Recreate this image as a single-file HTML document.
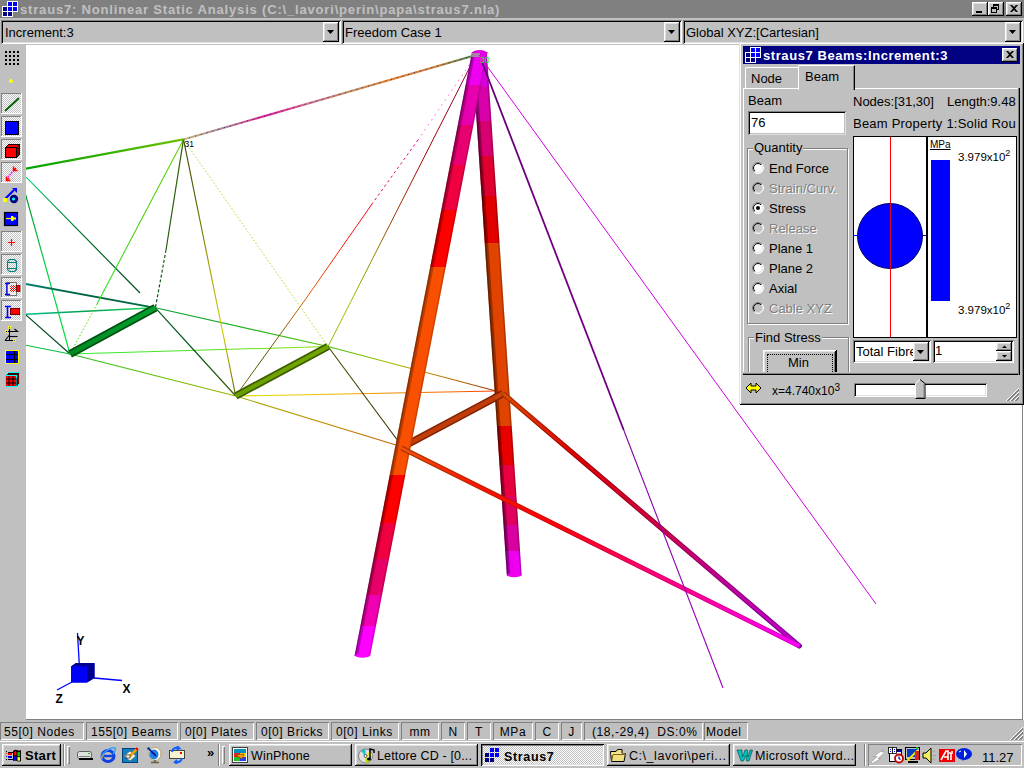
<!DOCTYPE html>
<html><head><meta charset="utf-8">
<style>
*{margin:0;padding:0;box-sizing:border-box}
html,body{width:1024px;height:768px;overflow:hidden;background:#c0c0c0;font-family:"Liberation Sans",sans-serif;color:#000}
.a{position:absolute}
.t{position:absolute;white-space:nowrap;line-height:1}
.raised{box-shadow:inset -1px -1px #000,inset 1px 1px #fff,inset -2px -2px #808080,inset 2px 2px #dfdfdf;background:#c0c0c0}
.sunk{box-shadow:inset 1px 1px #808080,inset -1px -1px #fff,inset 2px 2px #000,inset -2px -2px #dfdfdf}
.thin{box-shadow:inset 1px 1px #808080,inset -1px -1px #fff}
.dith{background-color:#fff;background-image:linear-gradient(45deg,#c0c0c0 25%,transparent 25%,transparent 75%,#c0c0c0 75%),linear-gradient(45deg,#c0c0c0 25%,transparent 25%,transparent 75%,#c0c0c0 75%);background-size:2px 2px;background-position:0 0,1px 1px}
</style></head><body>
<!-- title bar -->
<div class="a" style="left:0;top:0;width:1024px;height:18px;background:#808080"></div>
<div id="title" class="t" style="left:20px;top:3px;font-size:13px;font-weight:bold;color:#c0c0c0;letter-spacing:0.82px">straus7: Nonlinear Static Analysis (C:\_lavori\perin\papa\straus7.nla)</div>
<!-- main title icon -->
<svg class="a" style="left:0;top:0" width="20" height="18" viewBox="0 0 20 18">
<path d="M7 1h11v11h-5v5H2V6h5z" fill="#fff"/>
<rect x="8" y="2" width="4" height="4" fill="#00f"/><rect x="13" y="2" width="4" height="4" fill="#00f"/>
<rect x="3" y="7" width="4" height="4" fill="#000080"/><rect x="8" y="7" width="4" height="4" fill="#00f"/><rect x="13" y="7" width="4" height="4" fill="#00f"/>
<rect x="3" y="12" width="4" height="4" fill="#000080"/><rect x="8" y="12" width="4" height="4" fill="#000080"/>
</svg>
<!-- window buttons -->
<div class="a raised" style="left:972px;top:2px;width:16px;height:14px"></div>
<div class="a" style="left:976px;top:11px;width:6px;height:2px;background:#000"></div>
<div class="a raised" style="left:988px;top:2px;width:16px;height:14px"></div>
<svg class="a" style="left:988px;top:2px" width="16" height="14" shape-rendering="crispEdges"><path d="M5 2h6v2h-6zM10 4h1v4h-1zM5 4h1v1h-1zM9 7h1v1h-1z" fill="#000"/><path d="M3 5h6v2h-6zM3 7h1v4h-1zM8 7h1v4h-1zM3 10h6v1h-6z" fill="#000"/></svg>
<div class="a raised" style="left:1006px;top:2px;width:16px;height:14px"></div>
<svg class="a" style="left:1006px;top:2px" width="16" height="14"><path d="M4 3h2l2 2 2-2h2l-3 3.5 3 3.5h-2l-2-2-2 2h-2l3-3.5z" fill="#000"/></svg>

<!-- combos -->
<div class="a sunk" style="left:1px;top:20px;width:340px;height:24px;background:#c0c0c0"></div>
<div class="t" style="left:5px;top:26px;font-size:13px">Increment:3</div>
<div class="a raised" style="left:323px;top:22px;width:16px;height:20px"></div>
<svg class="a" style="left:323px;top:22px" width="16" height="20"><path d="M4 8h7l-3.5 4z" fill="#000"/></svg>

<div class="a sunk" style="left:342px;top:20px;width:340px;height:24px;background:#c0c0c0"></div>
<div class="t" style="left:345px;top:26px;font-size:13px">Freedom Case 1</div>
<div class="a raised" style="left:664px;top:22px;width:16px;height:20px"></div>
<svg class="a" style="left:664px;top:22px" width="16" height="20"><path d="M4 8h7l-3.5 4z" fill="#000"/></svg>

<div class="a sunk" style="left:683px;top:20px;width:340px;height:24px;background:#c0c0c0"></div>
<div class="t" style="left:686px;top:26px;font-size:13px">Global XYZ:[Cartesian]</div>
<div class="a raised" style="left:1005px;top:22px;width:16px;height:20px"></div>
<svg class="a" style="left:1005px;top:22px" width="16" height="20"><path d="M4 8h7l-3.5 4z" fill="#000"/></svg>

<!-- viewport -->
<div class="a" style="left:26px;top:44px;width:997px;height:676px;background:#808080"></div>
<div class="a" style="left:1023px;top:44px;width:1px;height:676px;background:#fff"></div>
<div class="a" style="left:26px;top:45px;width:996px;height:674px;background:#fff"></div>
<div class="a" style="left:26px;top:44px;width:998px;height:1px;background:#c0c0c0"></div>

<!--3D--><svg class="a" style="left:26px;top:45px" width="996" height="674" viewBox="26 45 996 674" fill="none"><defs><linearGradient id="g1" gradientUnits="userSpaceOnUse" x1="20" y1="169.81619047619046" x2="183.5" y2="139.4"><stop offset="0.0" stop-color="#00a000"/><stop offset="0.5" stop-color="#30b000"/><stop offset="1.0" stop-color="#70c000"/></linearGradient><linearGradient id="g2" gradientUnits="userSpaceOnUse" x1="20" y1="170.89473684210526" x2="140" y2="293"><stop offset="0.0" stop-color="#00e070"/><stop offset="0.5" stop-color="#007030"/><stop offset="1.0" stop-color="#005020"/></linearGradient><linearGradient id="g3" gradientUnits="userSpaceOnUse" x1="20" y1="174.45454545454544" x2="70" y2="354"><stop offset="0.0" stop-color="#008030"/><stop offset="0.5" stop-color="#00d040"/><stop offset="1.0" stop-color="#00e040"/></linearGradient><linearGradient id="g4" gradientUnits="userSpaceOnUse" x1="20" y1="282.8964451313756" x2="155.4" y2="307.8"><stop offset="0.0" stop-color="#008070"/><stop offset="0.5" stop-color="#006040"/><stop offset="1.0" stop-color="#007040"/></linearGradient><linearGradient id="g5" gradientUnits="userSpaceOnUse" x1="20" y1="314.6013910355487" x2="155.4" y2="307.8"><stop offset="0.0" stop-color="#00c090"/><stop offset="0.5" stop-color="#00a050"/><stop offset="1.0" stop-color="#20e060"/></linearGradient><linearGradient id="g6" gradientUnits="userSpaceOnUse" x1="70" y1="354" x2="235.7" y2="396"><stop offset="0.0" stop-color="#20c020"/><stop offset="0.5" stop-color="#60c000"/><stop offset="1.0" stop-color="#a0b000"/></linearGradient><linearGradient id="g7" gradientUnits="userSpaceOnUse" x1="70" y1="354" x2="328" y2="346.5"><stop offset="0.0" stop-color="#30f030"/><stop offset="0.5" stop-color="#50e020"/><stop offset="1.0" stop-color="#90e000"/></linearGradient><linearGradient id="g8" gradientUnits="userSpaceOnUse" x1="155.4" y1="307.8" x2="328" y2="346.5"><stop offset="0.0" stop-color="#00a030"/><stop offset="0.5" stop-color="#20b020"/><stop offset="1.0" stop-color="#50c000"/></linearGradient><linearGradient id="g9" gradientUnits="userSpaceOnUse" x1="155.4" y1="307.8" x2="235.7" y2="396"><stop offset="0.0" stop-color="#005a20"/><stop offset="0.5" stop-color="#005010"/><stop offset="1.0" stop-color="#406000"/></linearGradient><linearGradient id="g10" gradientUnits="userSpaceOnUse" x1="183.5" y1="139.4" x2="97" y2="304"><stop offset="0.0" stop-color="#60d000"/><stop offset="0.5" stop-color="#40d000"/><stop offset="1.0" stop-color="#20e020"/></linearGradient><linearGradient id="g11" gradientUnits="userSpaceOnUse" x1="183.5" y1="139.4" x2="166" y2="250"><stop offset="0.0" stop-color="#306000"/><stop offset="1.0" stop-color="#206010"/></linearGradient><linearGradient id="g12" gradientUnits="userSpaceOnUse" x1="166" y1="250" x2="155.4" y2="307.8"><stop offset="0.0" stop-color="#206010"/><stop offset="1.0" stop-color="#005020"/></linearGradient><linearGradient id="g13" gradientUnits="userSpaceOnUse" x1="183.5" y1="139.4" x2="235.7" y2="396"><stop offset="0.0" stop-color="#404000"/><stop offset="0.25" stop-color="#606000"/><stop offset="0.5" stop-color="#a0a000"/><stop offset="0.75" stop-color="#d0d000"/><stop offset="1.0" stop-color="#606000"/></linearGradient><linearGradient id="g14" gradientUnits="userSpaceOnUse" x1="183.5" y1="139.4" x2="476" y2="55"><stop offset="0.0" stop-color="#c8b888"/><stop offset="0.143" stop-color="#b08090"/><stop offset="0.286" stop-color="#e02090"/><stop offset="0.429" stop-color="#d07090"/><stop offset="0.571" stop-color="#c09060"/><stop offset="0.714" stop-color="#e08030"/><stop offset="0.857" stop-color="#d08040"/><stop offset="1.0" stop-color="#408040"/></linearGradient><linearGradient id="g15" gradientUnits="userSpaceOnUse" x1="418" y1="140" x2="372" y2="204"><stop offset="0.0" stop-color="#e000a0"/><stop offset="1.0" stop-color="#f00040"/></linearGradient><linearGradient id="g16" gradientUnits="userSpaceOnUse" x1="372" y1="204" x2="305" y2="300"><stop offset="0.0" stop-color="#f00020"/><stop offset="0.5" stop-color="#ff2000"/><stop offset="1.0" stop-color="#e06000"/></linearGradient><linearGradient id="g17" gradientUnits="userSpaceOnUse" x1="305" y1="300" x2="235.7" y2="396"><stop offset="0.0" stop-color="#e06000"/><stop offset="0.333" stop-color="#806000"/><stop offset="0.667" stop-color="#505000"/><stop offset="1.0" stop-color="#808000"/></linearGradient><linearGradient id="g18" gradientUnits="userSpaceOnUse" x1="476" y1="55" x2="328" y2="346.5"><stop offset="0.0" stop-color="#a00040"/><stop offset="0.143" stop-color="#a00020"/><stop offset="0.286" stop-color="#a00000"/><stop offset="0.429" stop-color="#a01000"/><stop offset="0.571" stop-color="#a04000"/><stop offset="0.714" stop-color="#909000"/><stop offset="0.857" stop-color="#a0c000"/><stop offset="1.0" stop-color="#80c000"/></linearGradient><linearGradient id="g19" gradientUnits="userSpaceOnUse" x1="235.7" y1="396" x2="496" y2="391"><stop offset="0.0" stop-color="#e0e000"/><stop offset="0.333" stop-color="#f0c000"/><stop offset="0.667" stop-color="#f08000"/><stop offset="1.0" stop-color="#ff4000"/></linearGradient><linearGradient id="g20" gradientUnits="userSpaceOnUse" x1="235.7" y1="396" x2="402.5" y2="447"><stop offset="0.0" stop-color="#a0b000"/><stop offset="0.5" stop-color="#c09000"/><stop offset="1.0" stop-color="#c06000"/></linearGradient><linearGradient id="g21" gradientUnits="userSpaceOnUse" x1="328" y1="346.5" x2="496" y2="391"><stop offset="0.0" stop-color="#40c000"/><stop offset="0.333" stop-color="#a0c000"/><stop offset="0.667" stop-color="#c08000"/><stop offset="1.0" stop-color="#a03000"/></linearGradient><linearGradient id="g22" gradientUnits="userSpaceOnUse" x1="328" y1="346.5" x2="402.5" y2="447"><stop offset="0.0" stop-color="#405000"/><stop offset="0.5" stop-color="#404000"/><stop offset="1.0" stop-color="#402000"/></linearGradient><linearGradient id="g23" gradientUnits="userSpaceOnUse" x1="70" y1="354" x2="155.4" y2="307.8"><stop offset="0.0" stop-color="#008a20"/><stop offset="1.0" stop-color="#00a030"/></linearGradient><linearGradient id="g24" gradientUnits="userSpaceOnUse" x1="235.7" y1="396" x2="328" y2="346.5"><stop offset="0.0" stop-color="#68a000"/><stop offset="1.0" stop-color="#70a800"/></linearGradient><linearGradient id="g25" gradientUnits="userSpaceOnUse" x1="503" y1="393.5" x2="799.4" y2="646"><stop offset="0.0" stop-color="#a03000"/><stop offset="0.25" stop-color="#a00000"/><stop offset="0.5" stop-color="#a00030"/><stop offset="0.75" stop-color="#900070"/><stop offset="1.0" stop-color="#8000a0"/></linearGradient><linearGradient id="g26" gradientUnits="userSpaceOnUse" x1="503" y1="393.5" x2="799.4" y2="646"><stop offset="0.0" stop-color="#e04800"/><stop offset="0.25" stop-color="#e00000"/><stop offset="0.5" stop-color="#d00040"/><stop offset="0.75" stop-color="#c000a0"/><stop offset="1.0" stop-color="#c000d0"/></linearGradient><linearGradient id="g27" gradientUnits="userSpaceOnUse" x1="401.5" y1="448" x2="799.4" y2="646"><stop offset="0.0" stop-color="#a03000"/><stop offset="0.2" stop-color="#c02000"/><stop offset="0.4" stop-color="#d00000"/><stop offset="0.6" stop-color="#d00050"/><stop offset="0.8" stop-color="#d00090"/><stop offset="1.0" stop-color="#d000d0"/></linearGradient><linearGradient id="g28" gradientUnits="userSpaceOnUse" x1="401.5" y1="448" x2="799.4" y2="646"><stop offset="0.0" stop-color="#f05010"/><stop offset="0.2" stop-color="#ff1000"/><stop offset="0.4" stop-color="#ff0010"/><stop offset="0.6" stop-color="#ff0070"/><stop offset="0.8" stop-color="#ff00b0"/><stop offset="1.0" stop-color="#ff00ff"/></linearGradient><linearGradient id="g29" gradientUnits="userSpaceOnUse" x1="482" y1="62" x2="623.7" y2="430"><stop offset="0.0" stop-color="#600070"/><stop offset="0.5" stop-color="#700080"/><stop offset="1.0" stop-color="#700080"/></linearGradient><linearGradient id="g30" gradientUnits="userSpaceOnUse" x1="623.7" y1="430" x2="723" y2="688"><stop offset="0.0" stop-color="#8000a0"/><stop offset="0.5" stop-color="#9000b0"/><stop offset="1.0" stop-color="#a000c0"/></linearGradient></defs><path d="M20.0,169.8L183.5,139.4" stroke="url(#g1)" stroke-width="2.21" stroke-linecap="butt"/>
<path d="M20.0,170.9L140.0,293.0" stroke="url(#g2)" stroke-width="1.2" stroke-linecap="butt"/>
<path d="M20.0,174.5L70.0,354.0" stroke="url(#g3)" stroke-width="1.2" stroke-linecap="butt"/>
<path d="M20.0,282.9L155.4,307.8" stroke="url(#g4)" stroke-width="1.76" stroke-linecap="butt"/>
<path d="M20.0,314.6L155.4,307.8" stroke="url(#g5)" stroke-width="1.44" stroke-linecap="butt"/>
<path d="M20.0,309.7L70.0,354.0" stroke="#004a20" stroke-width="1.2" stroke-linecap="butt"/>
<path d="M20.0,344.1L70.0,354.0" stroke="#00c040" stroke-width="1.04" stroke-linecap="butt"/>
<path d="M70.0,354.0L235.7,396.0" stroke="url(#g6)" stroke-width="1.04" stroke-linecap="butt"/>
<path d="M70.0,354.0L328.0,346.5" stroke="url(#g7)" stroke-width="1.04" stroke-linecap="butt"/>
<path d="M155.4,307.8L328.0,346.5" stroke="url(#g8)" stroke-width="1.12" stroke-linecap="butt"/>
<path d="M155.4,307.8L235.7,396.0" stroke="url(#g9)" stroke-width="1.2" stroke-linecap="butt"/>
<path d="M183.5,139.4L97.0,304.0" stroke="url(#g10)" stroke-width="1.04" stroke-linecap="butt"/>
<path d="M97.0,304.0L70.0,354.0" stroke="#40e000" stroke-width="1.0" stroke-dasharray="1.5 2" stroke-linecap="butt"/>
<path d="M183.5,139.4L166.0,250.0" stroke="url(#g11)" stroke-width="1.2" stroke-linecap="butt"/>
<path d="M166.0,250.0L155.4,307.8" stroke="url(#g12)" stroke-width="1.2" stroke-dasharray="3 2" stroke-linecap="butt"/>
<path d="M183.5,139.4L235.7,396.0" stroke="url(#g13)" stroke-width="1.12" stroke-linecap="butt"/>
<path d="M183.5,139.4L328.0,346.5" stroke="#a0e030" stroke-width="1.0" stroke-dasharray="1.5 2" stroke-linecap="butt"/>
<path d="M183.5,139.4L476.0,55.0" stroke="url(#g14)" stroke-width="2.12" stroke-linecap="butt"/>
<path d="M183.5,139.4L476.0,55.0" stroke="#000080" stroke-width="1.0" stroke-dasharray="1 5" stroke-opacity="0.7" stroke-linecap="butt"/>
<path d="M476.0,55.0L418.0,140.0" stroke="#ff00d0" stroke-width="1.0" stroke-dasharray="1 5" stroke-linecap="butt"/>
<path d="M418.0,140.0L372.0,204.0" stroke="url(#g15)" stroke-width="1.0" stroke-dasharray="2.5 3" stroke-linecap="butt"/>
<path d="M372.0,204.0L305.0,300.0" stroke="url(#g16)" stroke-width="1.0" stroke-linecap="butt"/>
<path d="M305.0,300.0L235.7,396.0" stroke="url(#g17)" stroke-width="1.0" stroke-linecap="butt"/>
<path d="M476.0,55.0L328.0,346.5" stroke="url(#g18)" stroke-width="1.0" stroke-linecap="butt"/>
<path d="M235.7,396.0L496.0,391.0" stroke="url(#g19)" stroke-width="1.04" stroke-linecap="butt"/>
<path d="M235.7,396.0L402.5,447.0" stroke="url(#g20)" stroke-width="1.04" stroke-linecap="butt"/>
<path d="M328.0,346.5L496.0,391.0" stroke="url(#g21)" stroke-width="1.04" stroke-linecap="butt"/>
<path d="M328.0,346.5L402.5,447.0" stroke="url(#g22)" stroke-width="1.12" stroke-linecap="butt"/>
<path d="M70.0,354.0L155.4,307.8" stroke="#005010" stroke-width="8" stroke-linecap="butt"/>
<path d="M70.0,354.0L155.4,307.8" stroke="url(#g23)" stroke-width="4.5" stroke-linecap="butt"/>
<path d="M235.7,396.0L328.0,346.5" stroke="#405a00" stroke-width="7.5" stroke-linecap="butt"/>
<path d="M235.7,396.0L328.0,346.5" stroke="url(#g24)" stroke-width="4" stroke-linecap="butt"/>
<path d="M503.0,393.5L402.5,447.0" stroke="#802000" stroke-width="7.5" stroke-linecap="round"/>
<path d="M503.0,393.5L402.5,447.0" stroke="#c03c08" stroke-width="4.5" stroke-linecap="butt"/>
<path d="M503.0,393.5L799.4,646.0" stroke="url(#g25)" stroke-width="5" stroke-linecap="round"/>
<path d="M503.0,393.5L799.4,646.0" stroke="url(#g26)" stroke-width="2.8" stroke-linecap="butt"/>
<path d="M472.0,52.0L486.8,52.0L489.1,87.0L474.3,87.0z" fill="#d800d8"/>
<path d="M474.3,87.0L489.1,87.0L491.4,121.0L476.6,121.0z" fill="#d800a8"/>
<path d="M476.6,121.0L491.4,121.0L493.7,156.0L478.9,156.0z" fill="#d80070"/>
<path d="M478.9,156.0L493.7,156.0L496.4,196.0L481.6,196.0z" fill="#e00030"/>
<path d="M481.6,196.0L496.4,196.0L499.5,243.0L484.7,243.0z" fill="#e00000"/>
<path d="M484.7,243.0L499.5,243.0L511.7,426.0L496.9,426.0z" fill="#e04400"/>
<path d="M496.9,426.0L511.7,426.0L514.3,465.0L499.5,465.0z" fill="#e80000"/>
<path d="M499.5,465.0L514.3,465.0L516.4,496.0L501.6,496.0z" fill="#e80040"/>
<path d="M501.6,496.0L516.4,496.0L518.3,525.0L503.5,525.0z" fill="#e00060"/>
<path d="M503.5,525.0L518.3,525.0L520.0,551.0L505.2,551.0z" fill="#d800a0"/>
<path d="M505.2,551.0L520.0,551.0L521.7,575.5L506.9,575.5z" fill="#ee00ee"/>
<path d="M472.0,52.0L475.5,52.0L510.4,575.5L506.9,575.5z" fill="#000" fill-opacity="0.33"/>
<path d="M472.0,52.0L473.5,52.0L508.4,575.5L506.9,575.5z" fill="#000" fill-opacity="0.33"/>
<path d="M485.3,52.0L486.8,52.0L521.7,575.5L520.2,575.5z" fill="#000" fill-opacity="0.23099999999999998"/>
<path d="M472.0,52.0L487.6,52.0L481.2,85.0L465.6,85.0z" fill="#f000f0"/>
<path d="M465.6,85.0L481.2,85.0L473.4,125.0L457.8,125.0z" fill="#e800b0"/>
<path d="M457.8,125.0L473.4,125.0L465.6,165.0L450.0,165.0z" fill="#e80070"/>
<path d="M450.0,165.0L465.6,165.0L456.9,210.0L441.3,210.0z" fill="#f00040"/>
<path d="M441.3,210.0L456.9,210.0L445.8,267.0L430.2,267.0z" fill="#ff0000"/>
<path d="M430.2,267.0L445.8,267.0L405.3,475.0L389.7,475.0z" fill="#f85000"/>
<path d="M389.7,475.0L405.3,475.0L396.0,523.0L380.4,523.0z" fill="#ff0000"/>
<path d="M380.4,523.0L396.0,523.0L389.0,559.0L373.4,559.0z" fill="#f00040"/>
<path d="M373.4,559.0L389.0,559.0L382.0,595.0L366.4,595.0z" fill="#e8006a"/>
<path d="M366.4,595.0L382.0,595.0L376.0,626.0L360.4,626.0z" fill="#f000b0"/>
<path d="M360.4,626.0L376.0,626.0L370.1,656.0L354.5,656.0z" fill="#ff00ff"/>
<path d="M472.0,52.0L475.5,52.0L358.0,656.0L354.5,656.0z" fill="#000" fill-opacity="0.25"/>
<path d="M472.0,52.0L473.5,52.0L356.0,656.0L354.5,656.0z" fill="#000" fill-opacity="0.25"/>
<path d="M486.1,52.0L487.6,52.0L370.1,656.0L368.6,656.0z" fill="#000" fill-opacity="0.175"/>
<path d="M503.0,393.5L494.5,397.9" stroke="#802000" stroke-width="7.5" stroke-linecap="butt"/>
<path d="M503.0,393.5L494.5,397.9" stroke="#c84408" stroke-width="4.5" stroke-linecap="butt"/>
<path d="M503.0,393.5L511.0,400.3" stroke="#a03000" stroke-width="5" stroke-linecap="butt"/>
<path d="M503.0,393.5L511.0,400.3" stroke="#e04800" stroke-width="2.8" stroke-linecap="butt"/>
<path d="M401.5,448.0L799.4,646.0" stroke="url(#g27)" stroke-width="4.8" stroke-linecap="butt"/>
<path d="M401.5,448.0L799.4,646.0" stroke="url(#g28)" stroke-width="2.8" stroke-linecap="butt"/>
<ellipse cx="514.2" cy="575" rx="7.3" ry="2.2" fill="#ee00ee"/>
<ellipse cx="362.5" cy="655.5" rx="7.7" ry="2.2" fill="#ff00ff"/>
<ellipse cx="479.5" cy="53" rx="7.5" ry="3" fill="#e000e0"/>
<rect x="471" y="53" width="9" height="4" fill="#a0a0a0" fill-opacity="0.8"/>
<path d="M479.0,55.0L876.0,604.0" stroke="#d000e0" stroke-width="1.0" stroke-linecap="butt"/>
<path d="M482.0,62.0L623.7,430.0" stroke="url(#g29)" stroke-width="1.8" stroke-linecap="butt"/>
<path d="M623.7,430.0L723.0,688.0" stroke="url(#g30)" stroke-width="1.1" stroke-linecap="butt"/>
<text x="184.5" y="147" font-family="Liberation Sans" font-size="8.5" fill="#000">31</text>
<text x="480" y="63" font-family="Liberation Sans" font-size="8.5" fill="#20e020">30</text>
<path d="M79.2 663L77.5 633M94 678L122 680.5M72 682L57 690" stroke="#0000ff" stroke-width="1.3"/>
<path d="M71 666.5L76 663H94.5V678L87 682.5H71z" fill="#0000e0"/>
<path d="M71 666.5L76 663H94.5L87 666.5z" fill="#000090"/>
<path d="M87 666.5L94.5 663V678L87 682.5z" fill="#000090"/>
<rect x="71" y="666.5" width="16" height="16" fill="#0000f8"/>
<text x="76.5" y="645" font-family="Liberation Sans" font-size="12" font-weight="bold" fill="#000">Y</text>
<text x="122.5" y="693" font-family="Liberation Sans" font-size="12" font-weight="bold" fill="#000">X</text>
<text x="55.5" y="702.5" font-family="Liberation Sans" font-size="12" font-weight="bold" fill="#000">Z</text></svg><!--/3D-->
<!-- left toolbar -->
<svg class="a" style="left:0;top:44px" width="26" height="676" viewBox="0 44 26 676" shape-rendering="crispEdges">
<defs><pattern id="dp" width="2" height="2" patternUnits="userSpaceOnUse"><rect width="2" height="2" fill="#fff"/><rect width="1" height="1" fill="#c0c0c0"/><rect x="1" y="1" width="1" height="1" fill="#c0c0c0"/></pattern></defs>
<g fill="#000">
<rect x="5" y="51" width="2" height="2"/><rect x="9" y="51" width="2" height="2"/><rect x="13" y="51" width="2" height="2"/><rect x="17" y="51" width="2" height="2"/>
<rect x="5" y="55" width="2" height="2"/><rect x="9" y="55" width="2" height="2"/><rect x="13" y="55" width="2" height="2"/><rect x="17" y="55" width="2" height="2"/>
<rect x="5" y="59" width="2" height="2"/><rect x="9" y="59" width="2" height="2"/><rect x="13" y="59" width="2" height="2"/><rect x="17" y="59" width="2" height="2"/>
<rect x="5" y="63" width="2" height="2"/><rect x="9" y="63" width="2" height="2"/><rect x="13" y="63" width="2" height="2"/><rect x="17" y="63" width="2" height="2"/>
</g>
<path d="M10 79h2v1h1v2h-1v1h-2v-1h-1v-2h1z" fill="#ff0"/>
<!-- pressed buttons -->
<g>
<rect x="1" y="93" width="21" height="21" fill="#fff"/><rect x="1" y="93" width="20" height="20" fill="#808080"/><rect x="2" y="94" width="19" height="19" fill="url(#dp)"/>
<rect x="1" y="116" width="21" height="21" fill="#fff"/><rect x="1" y="116" width="20" height="20" fill="#808080"/><rect x="2" y="117" width="19" height="19" fill="url(#dp)"/>
<rect x="1" y="139" width="21" height="21" fill="#fff"/><rect x="1" y="139" width="20" height="20" fill="#808080"/><rect x="2" y="140" width="19" height="19" fill="url(#dp)"/>
<rect x="1" y="162" width="21" height="21" fill="#fff"/><rect x="1" y="162" width="20" height="20" fill="#808080"/><rect x="2" y="163" width="19" height="19" fill="url(#dp)"/>
<rect x="1" y="231" width="21" height="21" fill="#fff"/><rect x="1" y="231" width="20" height="20" fill="#808080"/><rect x="2" y="232" width="19" height="19" fill="url(#dp)"/>
<rect x="1" y="254" width="21" height="21" fill="#fff"/><rect x="1" y="254" width="20" height="20" fill="#808080"/><rect x="2" y="255" width="19" height="19" fill="url(#dp)"/>
<rect x="1" y="277" width="21" height="21" fill="#fff"/><rect x="1" y="277" width="20" height="20" fill="#808080"/><rect x="2" y="278" width="19" height="19" fill="url(#dp)"/>
<rect x="1" y="300" width="21" height="21" fill="#fff"/><rect x="1" y="300" width="20" height="20" fill="#808080"/><rect x="2" y="301" width="19" height="19" fill="url(#dp)"/>
</g>
</svg>
<svg class="a" style="left:0;top:44px" width="26" height="676" viewBox="0 44 26 676">
<defs><pattern id="rp" width="2" height="2" patternUnits="userSpaceOnUse"><rect width="2" height="2" fill="#fff"/><rect width="1" height="1" fill="#f00"/><rect x="1" y="1" width="1" height="1" fill="#f00"/></pattern></defs>
<!-- 0 line -->
<path d="M5.5 110.5L18.5 98.5" stroke="#006000" stroke-width="1.8" stroke-linecap="round"/>
<!-- 1 blue square -->
<rect x="5.5" y="121.5" width="13" height="13" fill="#00f" stroke="#000"/>
<!-- 2 red cube -->
<path d="M5.5 147.5L8.5 144.5H19.5V154.5L16.5 157.5" fill="#800000" stroke="#000"/>
<path d="M5.5 147.5L8.5 144.5H19.5L16.5 147.5z" fill="#f00" stroke="#000" stroke-width="0.8"/>
<rect x="5.5" y="147.5" width="11" height="10" fill="#f00" stroke="#000"/>
<!-- 3 arrows -->
<path d="M8 177L15 169" stroke="#f0f" stroke-width="1.5" stroke-dasharray="1.5 1"/>
<path d="M13.5 166.5V170.5H17.5M6.5 176.5V180.5H10.5M6.5 180.5L9 178M13.5 170.5L16 168" stroke="#f00" stroke-width="1.5" fill="none"/>
<!-- 4 pen -->
<path d="M5 199L14 190" stroke="#00f" stroke-width="2.2"/>
<path d="M12 188L17 188L17 193z" fill="#00f"/>
<rect x="3" y="198" width="4" height="4" fill="#ff0"/>
<circle cx="14" cy="199" r="4.2" fill="#000080"/><circle cx="13.5" cy="199" r="1.6" fill="#0ff"/>
<!-- 5 blue box w arrow -->
<rect x="4.5" y="212.5" width="13" height="13" fill="#00f" stroke="#000" stroke-width="1.2"/>
<path d="M6 218.5H12" stroke="#ff0" stroke-width="1.2"/><path d="M11 216h2l1 1.5h2v2h-2l-1 1.5h-2z" fill="#ff0"/>
<!-- 6 plus -->
<path d="M8 242.5H15M11.5 239V246" stroke="#f00" stroke-width="1.2"/>
<!-- 7 cylinder -->
<path d="M7.5 261.5L9.5 259.5H14.5L16.5 261.5V269.5L14.5 271.5H9.5L7.5 269.5z M7.5 262.5H16.5M7.5 268.5H16.5" stroke="#008080" stroke-width="1.1" fill="none"/>
<!-- 8 I dotted -->
<rect x="6.5" y="282.5" width="10" height="13" fill="#fff" fill-opacity="0.5" stroke="#000" stroke-dasharray="1 1"/>
<path d="M7 283.5V294.5M5 283.5H10M5 294.5H10" stroke="#00f" stroke-width="1.3"/>
<rect x="10" y="285" width="6" height="7" rx="2" fill="url(#rp)"/>
<rect x="16.5" y="285.5" width="3.5" height="6" fill="#f00" stroke="#600" stroke-width="0.8"/>
<!-- 9 I + rect -->
<path d="M7.5 307V317M5 306.5H11M5 317.5H11" stroke="#00f" stroke-width="1.6"/>
<rect x="10.5" y="308.5" width="9" height="6" fill="#f00" stroke="#600"/>
<!-- 10 crop -->
<path d="M9.5 327.5V340.5M5.5 331.5H17.5L14.5 329M5 340.5H14.5M5 340.5L9.5 335" stroke="#000" stroke-width="1.1" fill="none"/>
<path d="M17.5 336.5H9.5" stroke="#000" stroke-width="1.1"/>
<rect x="5.5" y="330.5" width="2" height="2" fill="none" stroke="#ff0" stroke-width="0.8"/><rect x="8.5" y="326.5" width="2" height="2" fill="none" stroke="#ff0" stroke-width="0.8"/><rect x="13.5" y="339.5" width="2" height="2" fill="none" stroke="#ff0" stroke-width="0.8"/>
<!-- 11 blue grid -->
<rect x="5.5" y="350.5" width="13" height="13" fill="#00f" stroke="#ff0"/>
<path d="M6 354.5H18M6 359.5H18M9.5 351V363M14.5 351V363" stroke="#000"/>
<!-- 12 red cube grid -->
<path d="M5.5 375.5L8.5 372.5H19.5V383.5L16.5 386.5" fill="#800000" stroke="#0ff"/>
<rect x="5.5" y="375.5" width="11" height="11" fill="#f00" stroke="#0ff"/>
<path d="M6 379H16M6 383H16M9 376V386M13 376V386M8 374H19M17 378V386" stroke="#000" stroke-width="1"/>
</svg>

<!-- floating panel -->
<div class="a" style="left:739px;top:42px;width:285px;height:363px;background:#c0c0c0;box-shadow:inset 1px 1px #dfdfdf,inset -1px -1px #000,inset 2px 2px #fff,inset -2px -2px #808080"></div>
<div class="a" style="left:743px;top:46px;width:277px;height:18px;background:#000080"></div>
<svg class="a" style="left:743px;top:46px" width="20" height="18">
<path d="M7 1h11v11h-5v5H2V6h5z" fill="#fff"/>
<rect x="8" y="2" width="4" height="4" fill="#00f"/><rect x="13" y="2" width="4" height="4" fill="#00f"/>
<rect x="3" y="7" width="4" height="4" fill="#000080"/><rect x="8" y="7" width="4" height="4" fill="#00f"/><rect x="13" y="7" width="4" height="4" fill="#00f"/>
<rect x="3" y="12" width="4" height="4" fill="#000080"/><rect x="8" y="12" width="4" height="4" fill="#000080"/>
</svg>
<div class="t" style="left:763px;top:49px;font-size:13px;font-weight:bold;color:#fff;letter-spacing:0.58px">straus7 Beams:Increment:3</div>
<div class="a raised" style="left:1002px;top:48px;width:16px;height:14px"></div>
<svg class="a" style="left:1002px;top:48px" width="16" height="14"><path d="M4 3h2l2 2 2-2h2l-3 3.5 3 3.5h-2l-2-2-2 2h-2l3-3.5z" fill="#000"/></svg>
<!-- tabs -->
<div class="a" style="left:745px;top:67px;width:53px;height:22px;background:#c0c0c0;border-left:1px solid #fff;border-top:1px solid #fff;border-top-left-radius:2px"></div>
<div class="t" style="left:751px;top:72px;font-size:13px">Node</div>
<div class="a" style="left:743px;top:88px;width:277px;height:287px;background:#c0c0c0;box-shadow:inset 1px 1px #fff,inset -1px -1px #000,inset -2px -2px #808080"></div>
<div class="a" style="left:798px;top:65px;width:57px;height:25px;background:#c0c0c0;border-left:1px solid #fff;border-top:1px solid #fff;border-right:1px solid #000;border-top-left-radius:2px;box-shadow:inset -1px 0 #808080"></div>
<div class="a" style="left:799px;top:88px;width:54px;height:2px;background:#c0c0c0"></div>
<div class="t" style="left:805px;top:70px;font-size:13px">Beam</div>
<div class="t" style="left:748px;top:94px;font-size:13px">Beam</div>
<div class="a" style="left:748px;top:111px;width:98px;height:24px;background:#fff;box-shadow:inset 1px 1px #808080,inset -1px -1px #dfdfdf,inset 2px 2px #000,inset -2px -2px #c0c0c0"></div>
<div class="t" style="left:751px;top:116px;font-size:13px">76</div>
<svg width="0" height="0" style="position:absolute"><defs><linearGradient id="ro" x1="0" y1="0" x2="1" y2="1"><stop offset="0.5" stop-color="#808080"/><stop offset="0.5" stop-color="#fff"/></linearGradient><linearGradient id="ri" x1="0" y1="0" x2="1" y2="1"><stop offset="0.5" stop-color="#000"/><stop offset="0.5" stop-color="#dfdfdf"/></linearGradient></defs></svg>
<!-- quantity group -->
<div class="a" style="left:747px;top:148px;width:101px;height:176px;border:1px solid #808080;box-shadow:inset 1px 1px #fff,1px 1px #fff"></div>
<div class="t" style="left:753px;top:141px;font-size:13px;background:#c0c0c0;padding:0 1px">Quantity</div>
<svg class="a" style="left:752px;top:162px" width="12" height="12"><circle cx="6" cy="6" r="5.5" fill="#fff" stroke="url(#ro)"/><circle cx="6" cy="6" r="4.5" fill="none" stroke="url(#ri)"/></svg>
<div class="t" style="left:769px;top:162px;font-size:13px">End Force</div>
<svg class="a" style="left:752px;top:182px" width="12" height="12"><circle cx="6" cy="6" r="5.5" fill="#c0c0c0" stroke="url(#ro)"/><circle cx="6" cy="6" r="4.5" fill="none" stroke="url(#ri)"/></svg>
<div class="t" style="left:770px;top:183px;font-size:13px;color:#fff">Strain/Curv.</div>
<div class="t" style="left:769px;top:182px;font-size:13px;color:#808080">Strain/Curv.</div>
<svg class="a" style="left:752px;top:202px" width="12" height="12"><circle cx="6" cy="6" r="5.5" fill="#fff" stroke="url(#ro)"/><circle cx="6" cy="6" r="4.5" fill="none" stroke="url(#ri)"/><circle cx="6" cy="6" r="2" fill="#000"/></svg>
<div class="t" style="left:769px;top:202px;font-size:13px">Stress</div>
<svg class="a" style="left:752px;top:222px" width="12" height="12"><circle cx="6" cy="6" r="5.5" fill="#c0c0c0" stroke="url(#ro)"/><circle cx="6" cy="6" r="4.5" fill="none" stroke="url(#ri)"/></svg>
<div class="t" style="left:770px;top:223px;font-size:13px;color:#fff">Release</div>
<div class="t" style="left:769px;top:222px;font-size:13px;color:#808080">Release</div>
<svg class="a" style="left:752px;top:242px" width="12" height="12"><circle cx="6" cy="6" r="5.5" fill="#fff" stroke="url(#ro)"/><circle cx="6" cy="6" r="4.5" fill="none" stroke="url(#ri)"/></svg>
<div class="t" style="left:769px;top:242px;font-size:13px">Plane 1</div>
<svg class="a" style="left:752px;top:262px" width="12" height="12"><circle cx="6" cy="6" r="5.5" fill="#fff" stroke="url(#ro)"/><circle cx="6" cy="6" r="4.5" fill="none" stroke="url(#ri)"/></svg>
<div class="t" style="left:769px;top:262px;font-size:13px">Plane 2</div>
<svg class="a" style="left:752px;top:282px" width="12" height="12"><circle cx="6" cy="6" r="5.5" fill="#fff" stroke="url(#ro)"/><circle cx="6" cy="6" r="4.5" fill="none" stroke="url(#ri)"/></svg>
<div class="t" style="left:769px;top:282px;font-size:13px">Axial</div>
<svg class="a" style="left:752px;top:302px" width="12" height="12"><circle cx="6" cy="6" r="5.5" fill="#c0c0c0" stroke="url(#ro)"/><circle cx="6" cy="6" r="4.5" fill="none" stroke="url(#ri)"/></svg>
<div class="t" style="left:770px;top:303px;font-size:13px;color:#fff">Cable XYZ</div>
<div class="t" style="left:769px;top:302px;font-size:13px;color:#808080">Cable XYZ</div>
<!-- find stress group -->
<div class="a" style="left:743px;top:300px;width:275px;height:72px;overflow:hidden">
<div class="a" style="left:5px;top:37px;width:101px;height:50px;border:1px solid #808080;box-shadow:inset 1px 1px #fff,1px 1px #fff"></div>
<div class="t" style="left:11px;top:31px;font-size:13px;background:#c0c0c0;padding:0 1px">Find Stress</div>
<div class="a" style="left:20px;top:50px;width:74px;height:30px;background:#c0c0c0;box-shadow:inset -1px -1px #000,inset 1px 1px #fff,inset -2px -2px #000,inset 2px 2px #dfdfdf,inset -3px -3px #808080"></div>
<div class="a" style="left:24px;top:54px;width:66px;height:20px;border:1px dotted #000"></div>
<div class="t" style="left:45px;top:56px;font-size:13px">Min</div>
</div>
<!-- cover clipped below tab panel -->
<div class="a" style="left:743px;top:372px;width:277px;height:3px;background:#c0c0c0;box-shadow:inset 0 -1px #000,inset 0 -2px #808080"></div>
<div class="a" style="left:1018px;top:88px;width:2px;height:287px;box-shadow:inset -1px 0 #000,inset -2px 0 #808080"></div>
<!-- right side -->
<div class="t" style="left:853px;top:95px;font-size:13px">Nodes:[31,30]</div>
<div class="t" style="left:947px;top:95px;font-size:13px">Length:9.48</div>
<div class="a" style="left:854px;top:117px;width:162px;height:16px;overflow:hidden"><div class="t" style="left:-1px;top:0px;font-size:13px;letter-spacing:0.22px">Beam Property 1:Solid Round</div></div>
<div class="a" style="left:853px;top:136px;width:164px;height:202px;background:#fff;border:1px solid #000"></div>
<div class="a" style="left:926px;top:136px;width:2px;height:202px;background:#000"></div>
<div class="a" style="left:890px;top:137px;width:1px;height:200px;background:#f00"></div>
<div class="a" style="left:854px;top:235px;width:72px;height:1px;background:#00f"></div>
<div class="a" style="left:857px;top:203px;width:66px;height:66px;border-radius:50%;background:#00f;border:1px solid #000060"></div>
<div class="a" style="left:890px;top:203px;width:1px;height:66px;background:#e00030"></div>
<div class="t" style="left:930px;top:140px;font-size:10px;text-decoration:underline">MPa</div>
<div class="a" style="left:931px;top:160px;width:19px;height:141px;background:#00f"></div>
<div class="t" style="left:958px;top:152px;font-size:11.5px">3.979x10<sup style="font-size:9px;vertical-align:0;position:relative;top:-5px">2</sup></div>
<div class="t" style="left:958px;top:305px;font-size:11.5px">3.979x10<sup style="font-size:9px;vertical-align:0;position:relative;top:-5px">2</sup></div>
<!-- bottom combos -->
<div class="a" style="left:853px;top:340px;width:78px;height:23px;background:#fff;box-shadow:inset 1px 1px #808080,inset -1px -1px #fff,inset 2px 2px #000,inset -2px -2px #dfdfdf"></div>
<div class="a" style="left:855px;top:342px;width:58px;height:19px;overflow:hidden"><div class="t" style="left:1px;top:3px;font-size:13px">Total Fibre</div></div>
<div class="a raised" style="left:913px;top:342px;width:16px;height:19px"></div>
<svg class="a" style="left:913px;top:342px" width="16" height="19"><path d="M4 8h7l-3.5 4z" fill="#000"/></svg>
<div class="a" style="left:933px;top:340px;width:81px;height:23px;background:#fff;box-shadow:inset 1px 1px #808080,inset -1px -1px #fff,inset 2px 2px #000,inset -2px -2px #dfdfdf"></div>
<div class="t" style="left:935px;top:344px;font-size:13px">1</div>
<div class="a raised" style="left:996px;top:342px;width:16px;height:9px"></div>
<div class="a raised" style="left:996px;top:351px;width:16px;height:10px"></div>
<svg class="a" style="left:996px;top:342px" width="16" height="19"><path d="M6 6h5l-2.5-2.5zM6 13h5l-2.5 2.5z" fill="#000"/></svg>
<!-- bottom strip -->
<svg class="a" style="left:745px;top:381px" width="18" height="14"><path d="M1 7L6 2V5H11V2L16 7L11 12V9H6V12z" fill="#ff0" stroke="#000" stroke-width="1"/></svg>
<div class="t" style="left:772px;top:385px;font-size:12px">x=4.740x10<sup style="font-size:10px;vertical-align:0;position:relative;top:-4px">3</sup></div>
<div class="a" style="left:854px;top:383px;width:133px;height:14px;background:#fff;box-shadow:inset 1px 1px #808080,inset -1px -1px #fff,inset 2px 2px #000,inset -2px -2px #dfdfdf"></div>
<svg class="a" style="left:915px;top:379px" width="11" height="20"><path d="M0.5 19.5V4.5L5 0.5L10 4.5V19.5z" fill="#c0c0c0"/><path d="M0.5 19V4.5L5 0.5" stroke="#fff" fill="none"/><path d="M5 0.5L10 4.5V19.5H0.5" stroke="#000" fill="none"/><path d="M9 5V18.5H1.5" stroke="#808080" fill="none"/></svg>
<svg class="a" style="left:1005px;top:387px" width="15" height="15"><path d="M14 1L1 14M14 5L5 14M14 9L9 14" stroke="#fff"/><path d="M14 2L2 14M14 3L3 14M14 6L6 14M14 7L7 14M14 10L10 14M14 11L11 14" stroke="#808080"/></svg>

<!-- status bar -->
<div class="a thin" style="left:0px;top:722px;width:84px;height:18px"></div>
<div class="t" style="left:4px;top:726px;font-size:12px;letter-spacing:0.55px">55[0] Nodes</div>
<div class="a thin" style="left:86px;top:722px;width:92px;height:18px"></div>
<div class="t" style="left:91px;top:726px;font-size:12px;letter-spacing:0.55px">155[0] Beams</div>
<div class="a thin" style="left:180px;top:722px;width:74px;height:18px"></div>
<div class="t" style="left:185px;top:726px;font-size:12px;letter-spacing:0.55px">0[0] Plates</div>
<div class="a thin" style="left:256px;top:722px;width:73px;height:18px"></div>
<div class="t" style="left:261px;top:726px;font-size:12px;letter-spacing:0.55px">0[0] Bricks</div>
<div class="a thin" style="left:331px;top:722px;width:68px;height:18px"></div>
<div class="t" style="left:336px;top:726px;font-size:12px;letter-spacing:0.55px">0[0] Links</div>
<div class="a thin" style="left:401px;top:722px;width:38px;height:18px"></div>
<div class="t" style="left:401px;top:726px;width:38px;text-align:center;font-size:12px;letter-spacing:0.55px">mm</div>
<div class="a thin" style="left:441px;top:722px;width:24px;height:18px"></div>
<div class="t" style="left:441px;top:726px;width:24px;text-align:center;font-size:12px;letter-spacing:0.55px">N</div>
<div class="a thin" style="left:467px;top:722px;width:24px;height:18px"></div>
<div class="t" style="left:467px;top:726px;width:24px;text-align:center;font-size:12px;letter-spacing:0.55px">T</div>
<div class="a thin" style="left:493px;top:722px;width:40px;height:18px"></div>
<div class="t" style="left:493px;top:726px;width:40px;text-align:center;font-size:12px;letter-spacing:0.55px">MPa</div>
<div class="a thin" style="left:535px;top:722px;width:24px;height:18px"></div>
<div class="t" style="left:535px;top:726px;width:24px;text-align:center;font-size:12px;letter-spacing:0.55px">C</div>
<div class="a thin" style="left:561px;top:722px;width:21px;height:18px"></div>
<div class="t" style="left:561px;top:726px;width:21px;text-align:center;font-size:12px;letter-spacing:0.55px">J</div>
<div class="a thin" style="left:584px;top:722px;width:119px;height:18px"></div>
<div class="t" style="left:592px;top:726px;font-size:12px;letter-spacing:0.55px">(18,-29,4)&nbsp;&nbsp;DS:0%</div>
<div class="a thin" style="left:704px;top:722px;width:44px;height:18px"></div>
<div class="t" style="left:706px;top:726px;font-size:12px;letter-spacing:0.55px">Model</div>
<svg class="a" style="left:1009px;top:726px" width="15" height="15"><path d="M14 1L1 14M14 5L5 14M14 9L9 14" stroke="#fff"/><path d="M14 2L2 14M14 3L3 14M14 6L6 14M14 7L7 14M14 10L10 14M14 11L11 14" stroke="#808080"/></svg>
<!-- taskbar -->
<div class="a" style="left:0;top:740px;width:1024px;height:28px;background:#c0c0c0"></div>
<div class="a" style="left:0;top:741px;width:1024px;height:1px;background:#fff"></div>
<!-- start -->
<div class="a" style="left:2px;top:744px;width:59px;height:22px;background:#c0c0c0;box-shadow:inset -1px -1px #000,inset 1px 1px #fff,inset -2px -2px #808080,inset 2px 2px #dfdfdf"></div>
<svg class="a" style="left:5px;top:748px" width="18" height="16" viewBox="0 0 18 16">
<path d="M8 3Q10 1 12 2Q14 3 16 2V13Q14 14 12 13Q10 12 8 13z" fill="#000"/>
<path d="M9 4Q10 3 11.5 3.5V7.5Q10 7 9 7.5z" fill="#f00"/><path d="M12.5 3.8Q14 4.5 15 4V8Q14 8.5 12.5 8z" fill="#0c0"/>
<path d="M9 8.5Q10 8 11.5 8.5V12.5Q10 12 9 12.5z" fill="#00f"/><path d="M12.5 8.8Q14 9.5 15 9V12.5Q14 13 12.5 12.5z" fill="#ff0"/>
<rect x="1" y="3" width="1" height="1" fill="#000"/><rect x="1" y="5" width="1" height="1" fill="#f00"/><rect x="1" y="8" width="1" height="1" fill="#00f"/><rect x="1" y="11" width="1" height="1" fill="#000"/>
<rect x="3" y="5" width="4" height="2" fill="#f00"/><rect x="3" y="8" width="4" height="2" fill="#00f"/><rect x="3" y="4" width="5" height="1" fill="#000"/><rect x="3" y="11" width="5" height="1" fill="#000"/>
</svg>
<div class="t" style="left:25px;top:749px;font-size:13px;font-weight:bold;letter-spacing:0.3px">Start</div>
<!-- separators -->
<div class="a" style="left:63px;top:744px;width:2px;height:22px;box-shadow:inset 1px 0 #808080,inset -1px 0 #fff"></div>
<div class="a" style="left:67px;top:746px;width:3px;height:18px;box-shadow:inset 1px 1px #fff,inset -1px -1px #808080"></div>
<!-- quick launch icons -->
<svg class="a" style="left:76px;top:750px" width="18" height="12"><rect x="1.5" y="1.5" width="14" height="7" rx="2" fill="#e0e0e0" stroke="#606060"/><rect x="3" y="8" width="14" height="2" fill="#000"/><rect x="14" y="8" width="2" height="2" fill="#000"/><path d="M3 6.5H14" stroke="#808080"/><rect x="12" y="3" width="2" height="1" fill="#0c0"/></svg>
<svg class="a" style="left:100px;top:746px" width="17" height="17"><ellipse cx="8" cy="10" rx="6" ry="5.5" fill="none" stroke="#1040e0" stroke-width="3"/><path d="M3 10H13" stroke="#1040e0" stroke-width="2.5"/><path d="M2 14Q0 9 6 5Q12 1 15 2Q16 5 13 8" fill="none" stroke="#30a0ff" stroke-width="1.5"/><path d="M2 12L4 8" stroke="#f0a030" stroke-width="1"/></svg>
<svg class="a" style="left:122px;top:747px" width="17" height="17"><rect x="0.5" y="1.5" width="15" height="14" fill="#1080c0" stroke="#004080"/><path d="M2 9L8 4L14 9L8 14z" fill="#f0f0e0" stroke="#606060" stroke-width="0.7"/><path d="M7 10L15 2" stroke="#f0a000" stroke-width="2.5"/><path d="M14 1L16 3" stroke="#f00000" stroke-width="2"/><rect x="4" y="8" width="4" height="3" fill="#fff" stroke="#000" stroke-width="0.6"/></svg>
<svg class="a" style="left:147px;top:747px" width="15" height="17"><ellipse cx="8" cy="7" rx="6" ry="6.5" fill="#fff" stroke="#c0a060" stroke-width="1"/><ellipse cx="7" cy="7.5" rx="4.5" ry="5" fill="#2080e0"/><path d="M1 1L9 9" stroke="#000080" stroke-width="1.5"/><circle cx="1.5" cy="1.5" r="1.3" fill="#0040a0"/><path d="M8 13V15M4 15.5H12" stroke="#606040" stroke-width="1.5"/></svg>
<svg class="a" style="left:169px;top:746px" width="17" height="18"><rect x="0.5" y="4.5" width="15" height="8" fill="#f8f4d0" stroke="#404040"/><rect x="11" y="6" width="2" height="2" fill="#f00"/><path d="M3 6Q4 1 10 2L8 0M10 2L8 4" stroke="#1060ff" stroke-width="2" fill="none"/><path d="M13 12Q12 17 6 16L8 14M6 16L8 18" stroke="#1060ff" stroke-width="2" fill="none"/></svg>
<div class="t" style="left:207px;top:746px;font-size:13px;font-weight:bold">&raquo;</div>
<div class="a" style="left:218px;top:744px;width:2px;height:22px;box-shadow:inset 1px 0 #808080,inset -1px 0 #fff"></div>
<div class="a" style="left:222px;top:746px;width:3px;height:18px;box-shadow:inset 1px 1px #fff,inset -1px -1px #808080"></div>
<!-- task buttons -->
<div class="a" style="left:229px;top:744px;width:123px;height:22px;background:#c0c0c0;box-shadow:inset -1px -1px #000,inset 1px 1px #fff,inset -2px -2px #808080,inset 2px 2px #dfdfdf"></div>
<svg class="a" style="left:232px;top:747px" width="17" height="17"><rect x="0.5" y="0.5" width="15" height="15" fill="#fff" stroke="#404040"/><rect x="2" y="2" width="12" height="4" fill="#0090c0"/><rect x="2" y="6" width="6" height="8" fill="#f02020"/><rect x="8" y="6" width="6" height="4" fill="#ffd000"/><rect x="2" y="10" width="6" height="4" fill="#20c020"/><rect x="8" y="10" width="6" height="4" fill="#2040ff"/><path d="M4 8L12 7L10 12z" fill="#ffa000" stroke="#804000" stroke-width="0.7"/></svg>
<div class="t" style="left:251px;top:750px;font-size:12.5px;letter-spacing:0.15px">WinPhone</div>
<div class="a" style="left:355px;top:744px;width:123px;height:22px;background:#c0c0c0;box-shadow:inset -1px -1px #000,inset 1px 1px #fff,inset -2px -2px #808080,inset 2px 2px #dfdfdf"></div>
<svg class="a" style="left:358px;top:747px" width="17" height="17"><circle cx="7.5" cy="9" r="7" fill="#e0e0e0" stroke="#808080"/><path d="M7.5 9L3 4A7 7 0 0 1 7.5 2z" fill="#20c0c0"/><path d="M7.5 9L12 14A7 7 0 0 1 7.5 16z" fill="#c0e000"/><path d="M7.5 9L12 4A7 7 0 0 1 14.5 9z" fill="#f0f000"/><circle cx="7.5" cy="9" r="1.5" fill="#fff" stroke="#000" stroke-width="0.6"/><path d="M12 12V2L16 3V6" stroke="#000" stroke-width="1.5" fill="none"/><ellipse cx="11" cy="12" rx="2" ry="1.5" fill="#000"/></svg>
<div class="t" style="left:377px;top:750px;font-size:12.5px;letter-spacing:0.15px">Lettore CD - [0...</div>
<div class="a dith" style="left:481px;top:744px;width:123px;height:22px;box-shadow:inset 1px 1px #000,inset -1px -1px #fff,inset 2px 2px #808080,inset -2px -2px #dfdfdf"></div>
<svg class="a" style="left:485px;top:748px" width="16" height="16"><rect x="5" y="0" width="4" height="4" fill="#00f"/><rect x="10" y="0" width="4" height="4" fill="#00f"/><rect x="0" y="5" width="4" height="4" fill="#000080"/><rect x="5" y="5" width="4" height="4" fill="#00f"/><rect x="10" y="5" width="4" height="4" fill="#00f"/><rect x="0" y="10" width="4" height="4" fill="#000080"/><rect x="5" y="10" width="4" height="4" fill="#000080"/></svg>
<div class="t" style="left:504px;top:751px;font-size:12.5px;font-weight:bold;letter-spacing:0.65px">Straus7</div>
<div class="a" style="left:607px;top:744px;width:123px;height:22px;background:#c0c0c0;box-shadow:inset -1px -1px #000,inset 1px 1px #fff,inset -2px -2px #808080,inset 2px 2px #dfdfdf"></div>
<svg class="a" style="left:610px;top:748px" width="17" height="15"><path d="M0.5 3.5H6L7.5 1.5H12V5.5H15.5L14 13.5H1.5z" fill="#f0e080" stroke="#000"/><path d="M1 6H15" stroke="#fff8c0"/><path d="M1.5 13.5L3 6.5H16" stroke="#806000" fill="none"/></svg>
<div class="t" style="left:629px;top:750px;font-size:12.5px;letter-spacing:0.55px">C:\_lavori\peri...</div>
<div class="a" style="left:733px;top:744px;width:123px;height:22px;background:#c0c0c0;box-shadow:inset -1px -1px #000,inset 1px 1px #fff,inset -2px -2px #808080,inset 2px 2px #dfdfdf"></div>
<svg class="a" style="left:736px;top:748px" width="17" height="15"><path d="M1 2H6L6.5 9L9 2H11.5L12 9L14 2H16.5L13 13H10.5L10 7L7.5 13H5z" fill="#00c0c0" stroke="#004040" stroke-width="0.6"/></svg>
<div class="t" style="left:755px;top:750px;font-size:12.5px;letter-spacing:0.3px">Microsoft Word...</div>
<!-- tray -->
<div class="a" style="left:864px;top:744px;width:2px;height:22px;box-shadow:inset 1px 0 #808080,inset -1px 0 #fff"></div>
<div class="a" style="left:868px;top:744px;width:154px;height:22px;box-shadow:inset 1px 1px #808080,inset -1px -1px #fff"></div>
<svg class="a" style="left:870px;top:747px" width="17" height="17"><path d="M1 15.5L7 9.5H3.5L9 5.5L13 2.5L11.5 5H15.5L8 11.5H11L2.5 16.5z" fill="#fff" stroke="#a0a0a0" stroke-width="0.8" stroke-linejoin="round"/></svg>
<svg class="a" style="left:888px;top:747px" width="16" height="17"><rect x="1.5" y="2.5" width="12" height="12" fill="#fff" stroke="#000"/><rect x="5" y="3" width="8" height="2" fill="#0000a0"/><rect x="0.5" y="0.5" width="4" height="6" fill="#fff" stroke="#000" stroke-width="0.8"/><rect x="4.5" y="0.5" width="4" height="6" fill="#fff" stroke="#000" stroke-width="0.8"/><rect x="2" y="2" width="1" height="1" fill="#00f"/><rect x="2" y="4" width="1" height="1" fill="#00f"/><rect x="6" y="2" width="1" height="1" fill="#00f"/><rect x="6" y="4" width="1" height="1" fill="#00f"/><circle cx="11" cy="11.5" r="4" fill="#fff" stroke="#c00000" stroke-width="1.8"/><path d="M11 9.5V11.5L12.5 12.5" stroke="#000080" stroke-width="1.2" fill="none"/></svg>
<svg class="a" style="left:905px;top:747px" width="16" height="17"><rect x="0.5" y="0.5" width="14" height="12" fill="#c0c0c0" stroke="#000"/><rect x="2" y="2" width="11" height="8" fill="#0040c0"/><path d="M2 14L13 3" stroke="#f0e000" stroke-width="2"/><rect x="10" y="4" width="4" height="9" fill="#e02020"/><path d="M3 15H13" stroke="#000" stroke-width="2"/><rect x="11" y="0" width="2" height="2" fill="#0c0"/></svg>
<svg class="a" style="left:922px;top:747px" width="16" height="17"><path d="M1 6H4L9 1V16L4 11H1z" fill="#f0f060" stroke="#000" stroke-width="1"/><path d="M11 5L13 4M11 12L13 13M11 8.5H14" stroke="#a0a0a0" stroke-width="1"/></svg>
<svg class="a" style="left:939px;top:749px" width="16" height="13"><rect width="16" height="13" fill="#f00000"/><path d="M2 11L7 2H9V11M5 8H9M10 4H14M12 4V11M13 2V3" stroke="#fff" stroke-width="1.6" fill="none"/></svg>
<svg class="a" style="left:956px;top:747px" width="17" height="16"><ellipse cx="8" cy="7" rx="8" ry="6" fill="#0020e0"/><path d="M6 14L8 11L10 12z" fill="#0020e0"/><path d="M8 3L11 7L8 11z" fill="#fff"/><path d="M3 5L5 4" stroke="#fff"/></svg>
<div class="t" style="left:982px;top:751px;font-size:13px;letter-spacing:0px">11.27</div>
</body></html>
